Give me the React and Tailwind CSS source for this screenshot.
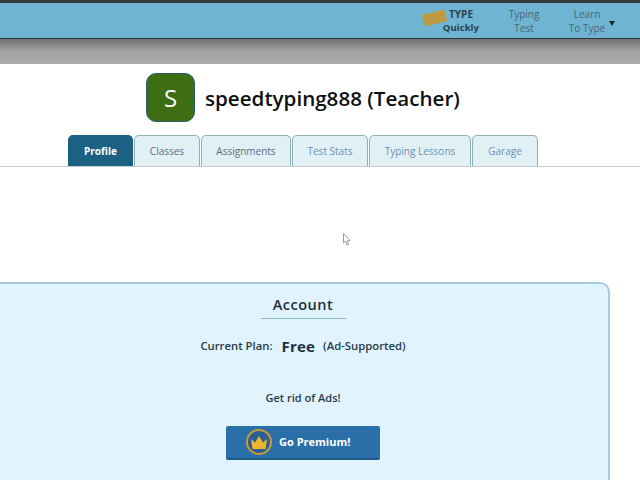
import React from 'react';

const tabs = [
  { label: 'Profile', width: 'w-[65px]', color: 'bg-[#1b6184] text-white font-bold border-[#1b6184]' },
  { label: 'Classes', width: 'w-[66px]', color: 'bg-[#e1f0f4] text-[#566f7d] border-[#8fb0b5]' },
  { label: 'Assignments', width: 'w-[90px]', color: 'bg-[#e1f0f4] text-[#566f7d] border-[#8fb0b5]' },
  { label: 'Test Stats', width: 'w-[76px]', color: 'bg-[#e1f0f4] text-[#6b92b0] border-[#8fb0b5]' },
  { label: 'Typing Lessons', width: 'w-[102px]', color: 'bg-[#e1f0f4] text-[#6b92b0] border-[#8fb0b5]' },
  { label: 'Garage', width: 'w-[66px]', color: 'bg-[#e1f0f4] text-[#6b92b0] border-[#8fb0b5]' },
];

const Header = () => (
  <header>
    <div className="h-[3px] bg-[#33393d]" />
    <nav className="h-[35px] bg-[#6fb5d3] flex justify-end text-[10px] leading-[14px] text-[#4b6474]">
      <div className="relative w-[60px] mt-[4px] text-right font-bold text-[#2e3f4a] mr-[21px]">
        <div className="absolute left-[4px] top-[5px] w-[23px] h-[12px] bg-[#bd9a3f] -rotate-[14deg]" />
        <div className="relative pr-[6px]">TYPE</div>
        <div className="relative text-[9.6px]">Quickly</div>
      </div>
      <div className="w-[48px] mt-[4px] text-center">
        <div>Typing</div>
        <div>Test</div>
      </div>
      <div className="w-[60px] ml-[9px] mr-[23px] mt-[4px] text-center relative">
        <div>Learn</div>
        <div>To Type</div>
        <span className="absolute right-[2px] top-[14px] border-x-[3px] border-x-transparent border-t-[5px] border-t-[#1b2429]" />
      </div>
    </nav>
    <div className="h-[1px] bg-[#2f3538]" />
    <div className="h-[25px] bg-gradient-to-b from-[#6f7173] via-[#a3a3a3] to-[#a9a9a9]" />
  </header>
);

const Cursor = () => (
  <svg className="absolute left-[343px] top-[233px]" width="8" height="13" viewBox="0 0 8 13" fill="none">
    <path d="M0.5 0.5V10L2.6 8.2L4 12L5.6 11.3L4.2 7.8H7.2Z" fill="#fff" stroke="#9a9a9a" strokeWidth="1" />
  </svg>
);

const Crown = () => (
  <span className="w-[26px] h-[26px] rounded-full bg-[#2a5f92] border-2 border-[#c79a3a] flex items-center justify-center shrink-0">
    <svg width="18" height="15" viewBox="0 0 18 15">
      <path d="M1 4L5 7.5L9 1L13 7.5L17 4L15.5 14H2.5Z" fill="#efb52f" />
    </svg>
  </span>
);

const App = () => (
  <div className="relative w-[640px] h-[480px] overflow-hidden bg-white font-['Open_Sans',sans-serif]">
    <Header />

    <div className="h-[71px] flex items-start pl-[146px] pt-[9px]">
      <div className="w-[49px] h-[49px] rounded-[10px] bg-[#3d6e12] border border-[#2b5a70] flex items-center justify-center text-white text-[24px]">
        S
      </div>
      <h1 className="ml-[10px] mt-[11px] text-[20.6px] leading-[28px] font-semibold text-[#0c0f11] whitespace-nowrap">
        speedtyping888 (Teacher)
      </h1>
    </div>

    <div className="h-[32px] flex pl-[68px] gap-[1px] border-b border-[#c5cccc]">
      {tabs.map((tab) => (
        <div
          key={tab.label}
          className={`${tab.width} ${tab.color} h-[31px] rounded-t-[5px] border border-b-0 flex items-center justify-center text-[10px]`}
        >
          {tab.label}
        </div>
      ))}
    </div>

    <section className="mt-[115px] ml-[-12px] w-[622px] h-[260px] rounded-[10px] border-2 border-[#a5cbdc] bg-[#e0f3fe] text-[#2a3b4a]">
      <div className="ml-[12px] w-[602px] flex flex-col items-center">
        <h2 className="mt-[10px] w-[85px] pb-[2px] border-b border-[#86b5c6] text-center text-[14.5px] leading-[22px] font-semibold tracking-[0.5px] text-[#1e3040]">
          Account
        </h2>
        <p className="mt-[15px] flex items-center text-[11.3px] leading-[24px] font-semibold whitespace-nowrap">
          <span>Current Plan:</span>
          <span className="ml-[9px] text-[15px] font-bold tracking-[0.2px] text-[#1e3040]">Free</span>
          <span className="ml-[8px]">(Ad-Supported)</span>
        </p>
        <p className="mt-[32px] text-[11px] leading-[16px] font-semibold">Get rid of Ads!</p>
        <button className="mt-[20px] w-[154px] h-[34px] rounded-[2px] bg-[#2a6fa8] border-b-2 border-[#1c5a8a] flex items-center pl-[20px] gap-[7px] text-white text-[11px] font-bold">
          <Crown />
          Go Premium!
        </button>
      </div>
    </section>

    <Cursor />
  </div>
);

export default App;
